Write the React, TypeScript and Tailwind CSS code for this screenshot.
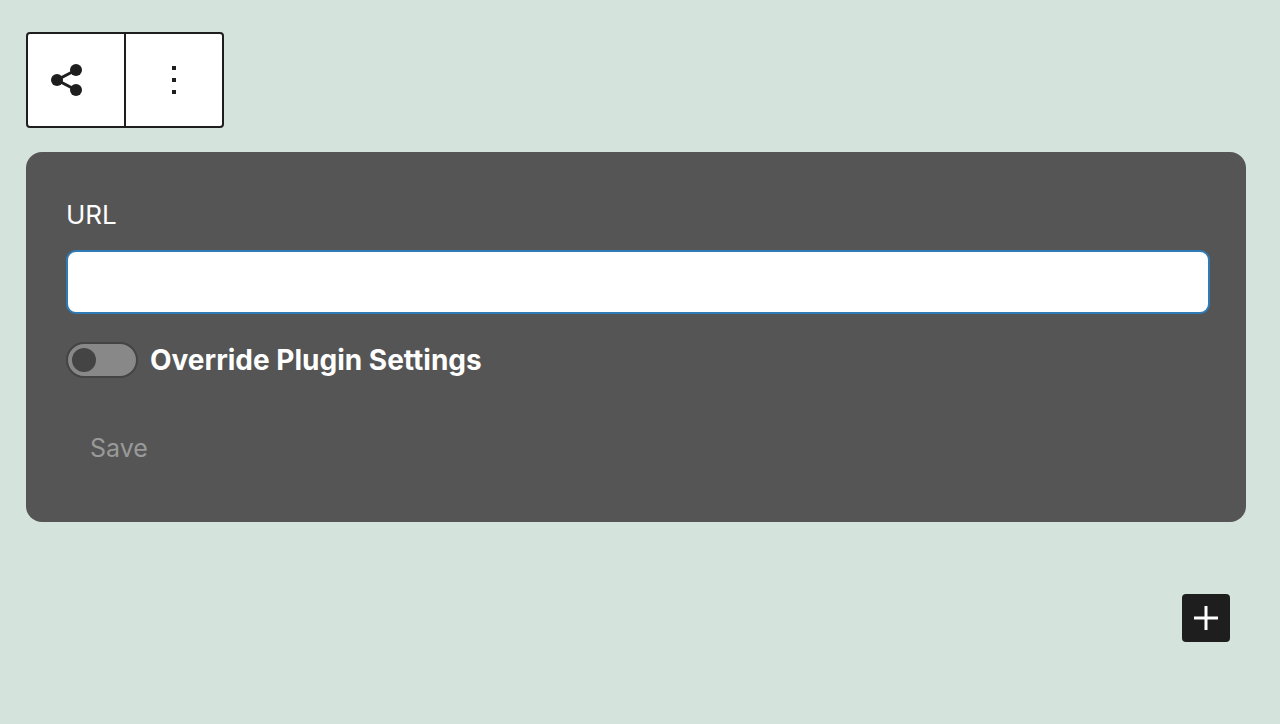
import { useState } from "react";

function ShareIcon() {
  return (
    <svg width="40" height="40" viewBox="0 0 40 40" fill="#1e1e1e" aria-hidden="true">
      <path d="M28 10 9 20l19 10" fill="none" stroke="#1e1e1e" strokeWidth="3" />
      <circle cx="9" cy="20" r="6" />
      <circle cx="28" cy="10" r="6" />
      <circle cx="28" cy="30" r="6" />
    </svg>
  );
}

function MoreIcon() {
  return (
    <svg width="48" height="48" viewBox="0 0 48 48" fill="#1e1e1e" aria-hidden="true">
      <path d="M22 10h4v4h-4zM22 22h4v4h-4zM22 34h4v4h-4z" />
    </svg>
  );
}

function PlusIcon() {
  return (
    <svg width="48" height="48" viewBox="0 0 48 48" fill="none" stroke="#fff" strokeWidth="3" aria-hidden="true">
      <path d="M24 12v24M12 24h24" />
    </svg>
  );
}

function Toolbar() {
  return (
    <div role="toolbar" aria-label="Block tools" className="flex h-24 w-fit divide-x-2 divide-[#1e1e1e] rounded-sm border-2 border-[#1e1e1e] bg-white">
      <button type="button" aria-label="Share" className="flex w-[98px] items-center pl-5">
        <ShareIcon />
      </button>
      <button type="button" aria-label="Options" className="flex w-24 items-center justify-center">
        <MoreIcon />
      </button>
    </div>
  );
}

export default function App() {
  const [url, setUrl] = useState("");
  const [override, setOverride] = useState(false);

  return (
    <main className="min-h-screen bg-[#d4e3dc] pt-8 pr-[34px] pl-[26px] font-['Inter',sans-serif]">
      <Toolbar />

      <form className="mt-6 rounded-2xl bg-[#555] pt-11 pr-9 pb-10 pl-10 text-[26px] leading-[38px] text-white" onSubmit={(e) => e.preventDefault()}>
        <label htmlFor="url" className="block">
          URL
        </label>
        <input
          id="url"
          type="text"
          value={url}
          onChange={(e) => setUrl(e.target.value)}
          className="mt-4 block h-16 w-full rounded-[10px] border-2 border-[#2e7bb8] bg-white px-4 text-[#1e1e1e] outline-none"
        />

        <div className="mt-7 flex h-9 items-center gap-3">
          <input
            id="override"
            type="checkbox"
            role="switch"
            checked={override}
            onChange={(e) => setOverride(e.target.checked)}
            className="flex h-9 w-[72px] shrink-0 appearance-none items-center rounded-full border-2 border-[#444] bg-[#888] px-1 before:size-6 before:rounded-full before:bg-[#444] checked:justify-end"
          />
          <label htmlFor="override" className="text-[28px] font-bold">
            Override Plugin Settings
          </label>
        </div>

        <button type="submit" disabled={!url} className="mt-9 block h-[68px] px-6 text-[25px] text-white disabled:text-[#999]">
          Save
        </button>
      </form>

      <div className="mt-[72px] flex justify-end pr-4">
        <button type="button" aria-label="Add block" className="rounded-sm bg-[#1e1e1e]">
          <PlusIcon />
        </button>
      </div>
    </main>
  );
}
